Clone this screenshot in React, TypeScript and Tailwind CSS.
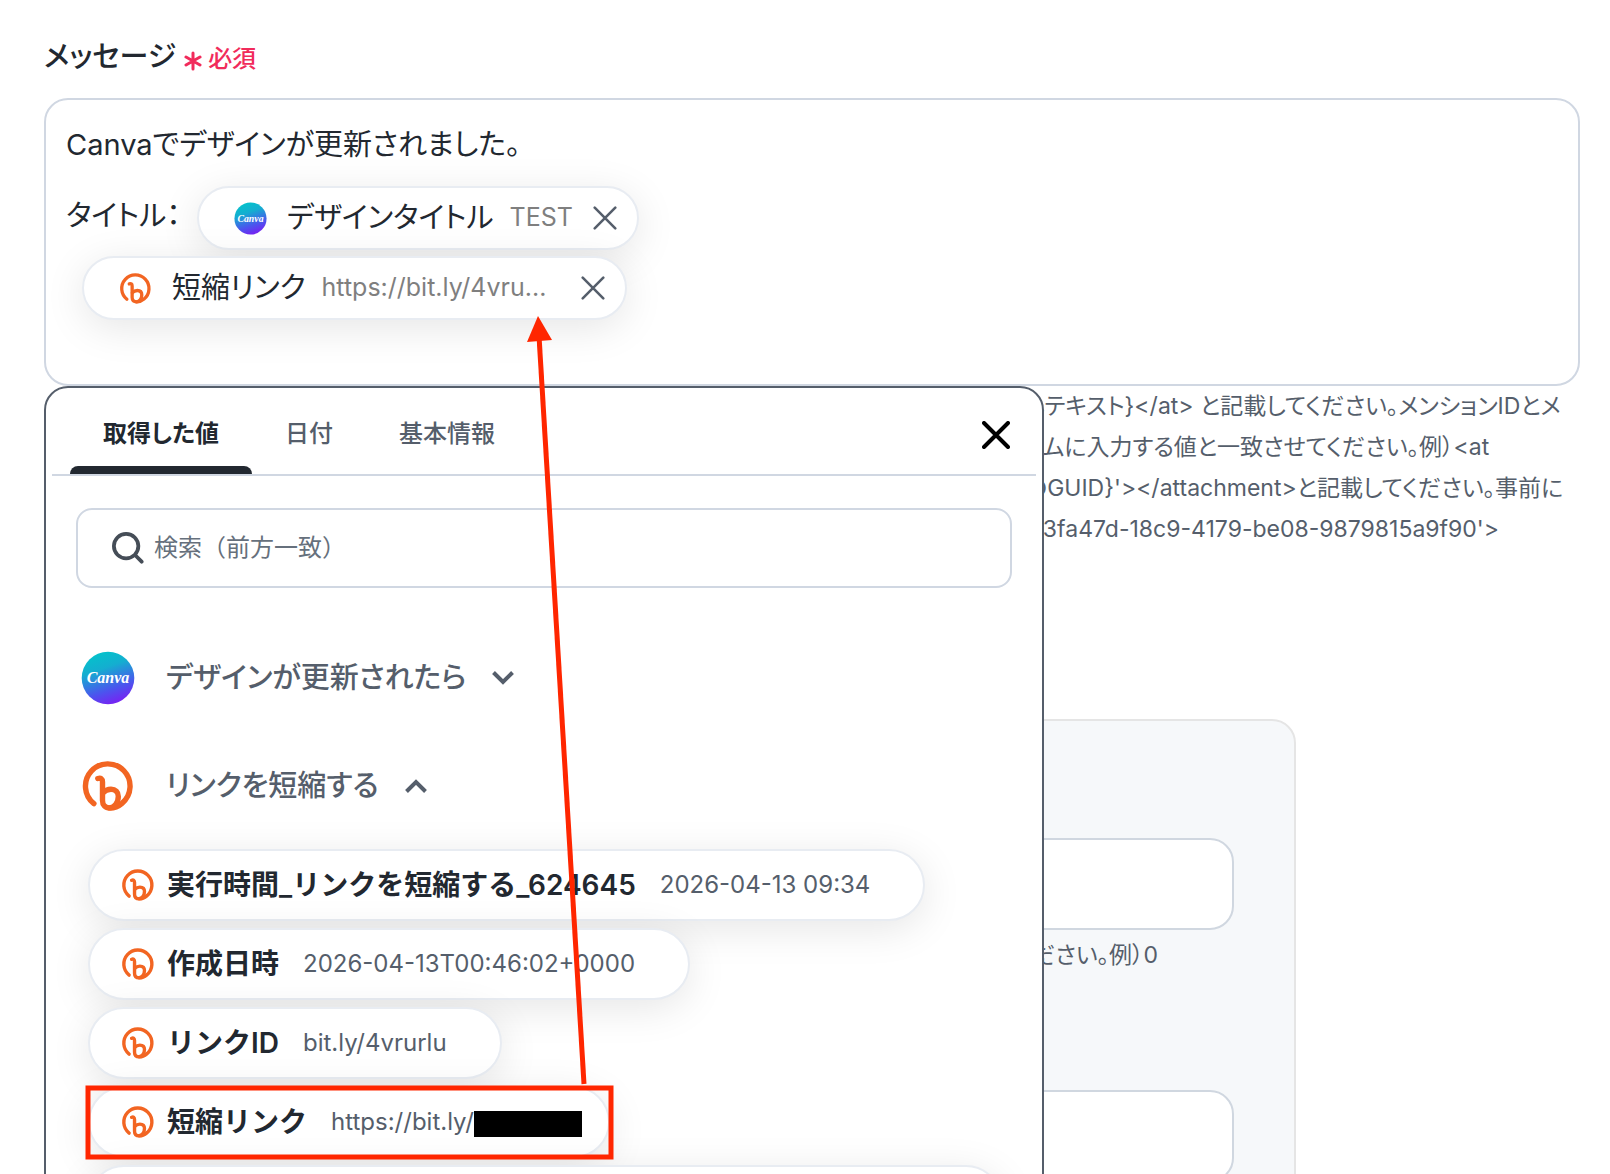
import { useState } from 'react';

const VALUES = [
  { name: '実行時間_リンクを短縮する_624645', value: '2026-04-13 09:34' },
  { name: '作成日時', value: '2026-04-13T00:46:02+0000' },
  { name: 'リンクID', value: 'bit.ly/4vrurlu' },
  { name: '短縮リンク', value: 'https://bit.ly/', redacted: true },
];

const HELP_LINES = [
  'しテキスト}</at> と記載してください。メンションIDとメ',
  'トムに入力する値と一致させてください。例）<at',
  "のGUID}'></attachment>と記載してください。事前に",
  "1f3fa47d-18c9-4179-be08-9879815a9f90'>",
];

function CanvaIcon({ className }: { className: string }) {
  return (
    <svg viewBox="0 0 54 54" className={className} aria-hidden="true">
      <defs>
        <linearGradient id="canva" x1="0.35" y1="0" x2="0.7" y2="1">
          <stop offset="0" stopColor="#04c2cb" />
          <stop offset="0.3" stopColor="#14aed0" />
          <stop offset="0.7" stopColor="#4b55ee" />
          <stop offset="1" stopColor="#7c1cf3" />
        </linearGradient>
      </defs>
      <circle cx="27" cy="27" r="26.3" fill="url(#canva)" />
      <text x="27" y="32" textAnchor="middle" fill="#fff" fontSize="16" fontStyle="italic" fontWeight="700" fontFamily="Liberation Serif, serif">Canva</text>
    </svg>
  );
}

function BitlyIcon({ className }: { className: string }) {
  return (
    <svg viewBox="-2 -2 54 54" className={className} fill="none" stroke="#f26522" strokeLinecap="round" strokeWidth="5.4" aria-hidden="true">
      <path d="M10.9 42.6 A22.3 22.3 0 1 1 39 42.3 C35.5 45.3 31 47 27 47 C22 47 19.5 44 19.5 39.5 V21 C19.5 17.5 17.8 16.6 14.8 17.5" />
      <path d="M19.8 32 C22 29.5 25 28.3 28 28.3 C32.5 28.3 35.3 31 35.3 35.5 C35.3 41.5 31.5 46.9 26.5 46.9" />
    </svg>
  );
}

function CloseIcon({ className, weight = 3 }: { className: string; weight?: number }) {
  return (
    <svg viewBox="0 0 28 28" className={className} fill="none" stroke="currentColor" strokeWidth={weight} strokeLinecap="round" aria-hidden="true">
      <path d="M2 2 L26 26 M26 2 L2 26" />
    </svg>
  );
}

function Chevron({ up = false }: { up?: boolean }) {
  return (
    <svg viewBox="0 0 22 14" className="w-[22px] h-[14px]" fill="none" stroke="currentColor" strokeWidth="4" aria-hidden="true">
      <path d={up ? 'M1.5 12.5 L11 3 L20.5 12.5' : 'M1.5 1.5 L11 11 L20.5 1.5'} />
    </svg>
  );
}

export default function App() {
  const [tab, setTab] = useState('取得した値');

  return (
    <main
      lang="ja"
      className="h-screen overflow-hidden bg-white pl-11 pr-[30px] pt-9 text-[29px] text-[#222830] font-[Inter,'Noto_Sans_CJK_JP',sans-serif] [font-feature-settings:'palt']"
    >
      {/* Label */}
      <div className="flex items-center gap-2 h-[62px] pb-5">
        <span id="message-label" className="font-medium">メッセージ</span>
        <span className="flex items-center gap-[6px] pt-1 text-[24px] font-medium text-[#f12b5b]">
          <svg viewBox="0 0 18 20" className="w-[18px] h-5 mt-1" stroke="currentColor" strokeWidth="3" strokeLinecap="round" aria-hidden="true">
            <path d="M9 2 V18 M2 6 L16 14 M16 6 L2 14" />
          </svg>
          必須
        </span>
      </div>

      {/* Message body */}
      <div
        role="textbox"
        aria-labelledby="message-label"
        className="h-72 rounded-3xl border-2 border-[#d0d7e2] px-5 pt-6 flex flex-col"
      >
        <p className="leading-[42px]">Canvaでデザインが更新されました。</p>
        <div className="flex items-center mt-5 gap-4">
          <span className="pb-1">タイトル：</span>
          <span className="flex items-center h-16 rounded-full border-2 border-[#e8ecf2] bg-white pl-[35px] pr-5 shadow-[0_8px_40px_rgba(0,0,0,0.1)]">
            <CanvaIcon className="w-[33px] h-[33px]" />
            <span className="ml-5">デザインタイトル</span>
            <span className="ml-4 text-[25px] text-[#7f7f7f]">TEST</span>
            <button type="button" aria-label="削除" className="ml-5 text-[#555e6b]">
              <CloseIcon className="w-6 h-6" />
            </button>
          </span>
        </div>
        <div className="flex mt-[6px] ml-4">
          <span className="flex items-center h-16 rounded-full border-2 border-[#e8ecf2] bg-white pl-[35px] pr-5 shadow-[0_8px_40px_rgba(0,0,0,0.1)]">
            <BitlyIcon className="w-[33px] h-[33px]" />
            <span className="ml-5">短縮リンク</span>
            <span className="ml-4 w-[231px] text-[25px] text-[#7f7f7f]">https://bit.ly/4vru...</span>
            <button type="button" aria-label="削除" className="ml-7 text-[#555e6b]">
              <CloseIcon className="w-6 h-6" />
            </button>
          </span>
        </div>
      </div>

      <div className="relative">
        {/* Help text */}
        <div className="pl-[981px] text-[23px] leading-[41px] text-[#555e6b] whitespace-nowrap">
          {HELP_LINES.map((line) => (
            <p key={line}>{line}</p>
          ))}
        </div>

        {/* Settings card */}
        <div className="mt-[169px] max-w-[1252px] h-[600px] rounded-3xl border-2 border-[#e5e5e5] bg-[#f6f8fa] pl-10 pr-[60px] pt-[117px]">
          <input aria-label="値 1" className="block w-full h-[92px] rounded-3xl border-2 border-[#d0d7e0] bg-white px-6" />
          <p className="pl-[946px] text-[23px] leading-[42px] mt-1 text-[#555e6b] whitespace-nowrap">ださい。例）0</p>
          <input aria-label="値 2" className="mt-[114px] block w-full h-[92px] rounded-3xl border-2 border-[#d0d7e0] bg-white px-6" />
        </div>

        {/* Value picker */}
        <section className="absolute left-0 top-0 w-[1000px] h-[900px] rounded-t-3xl border-2 border-[#555e6b] bg-white px-[6px]">
          <header className="flex items-stretch h-[88px] border-b-2 border-[#d0d7e2] pl-[18px] pr-[26px]">
            <div role="tablist" className="flex text-[24px] text-[#555e6b]">
              {['取得した値', '日付', '基本情報'].map((name) => (
                <button
                  key={name}
                  type="button"
                  role="tab"
                  aria-selected={tab === name}
                  onClick={() => setTab(name)}
                  className={`flex flex-col items-center px-[33px] pt-7 ${tab === name ? 'relative font-semibold text-[#222830]' : 'font-medium'}`}
                >
                  {name}
                  {tab === name && <span className="absolute bottom-0 inset-x-0 h-2 rounded-t-lg bg-[#222830]" />}
                </button>
              ))}
            </div>
            <button type="button" aria-label="閉じる" className="ml-auto mt-2 text-black">
              <CloseIcon className="w-7 h-7" weight={4} />
            </button>
          </header>

          <label className="mx-6 mt-8 flex items-center gap-[10px] h-20 rounded-2xl border-2 border-[#d0d7e2] px-[34px]">
            <svg viewBox="0 0 34 34" className="w-8 h-8" fill="none" stroke="#454d57" strokeWidth="4" strokeLinecap="round" aria-hidden="true">
              <circle cx="15" cy="15" r="13" />
              <path d="M25 25 L31.5 31.5" />
            </svg>
            <input
              aria-label="検索"
              placeholder="検索（前方一致）"
              className="grow text-[24px] outline-none placeholder:text-[#66707c] [font-feature-settings:normal]"
            />
          </label>

          <button type="button" className="ml-[29px] mt-[63px] flex items-center font-medium text-[#555e6b]">
            <CanvaIcon className="w-[54px] h-[54px] mr-[31px]" />
            デザインが更新されたら
            <span className="ml-[26px]"><Chevron /></span>
          </button>
          <button type="button" className="ml-[29px] mt-[54px] flex items-center font-medium text-[#555e6b]">
            <BitlyIcon className="w-[54px] h-[54px] mr-[31px]" />
            リンクを短縮する
            <span className="ml-[26px]"><Chevron up /></span>
          </button>

          <ul className="ml-9 mt-9 flex flex-col items-start gap-[7px] text-[28px] [font-feature-settings:normal]">
            {VALUES.map((v) => (
              <li key={v.name}>
                <button type="button" className="flex items-center h-[72px] rounded-full border-2 border-[#e8ecf2] bg-white pl-[31px] pr-[53px] shadow-[0_8px_40px_rgba(0,0,0,0.1)]">
                  <BitlyIcon className="w-[34px] h-[34px]" />
                  <span className="ml-3 font-semibold">{v.name}</span>
                  <span className="ml-6 text-[24px] text-[#555e6b]">{v.value}</span>
                  {v.redacted && <span className="w-[108px] h-[26px] bg-black mt-1 -mr-[27px]" />}
                </button>
              </li>
            ))}
            <li className="w-[914px] h-[72px] rounded-full border-2 border-[#e8ecf2] bg-white shadow-[0_8px_40px_rgba(0,0,0,0.1)]" />
          </ul>
        </section>
      </div>

      {/* Arrow and frame drawn over the form */}
      <svg width="1610" height="1174" viewBox="0 0 1610 1174" className="absolute left-0 top-0 pointer-events-none" aria-hidden="true">
        <path d="M584 1084 L539 336" stroke="#ff2600" strokeWidth="5" />
        <path d="M538 316 L527 342 L552 340 Z" fill="#ff2600" />
        <rect x="88" y="1088" width="523" height="69" fill="none" stroke="#ff2600" strokeWidth="5" />
      </svg>
    </main>
  );
}
